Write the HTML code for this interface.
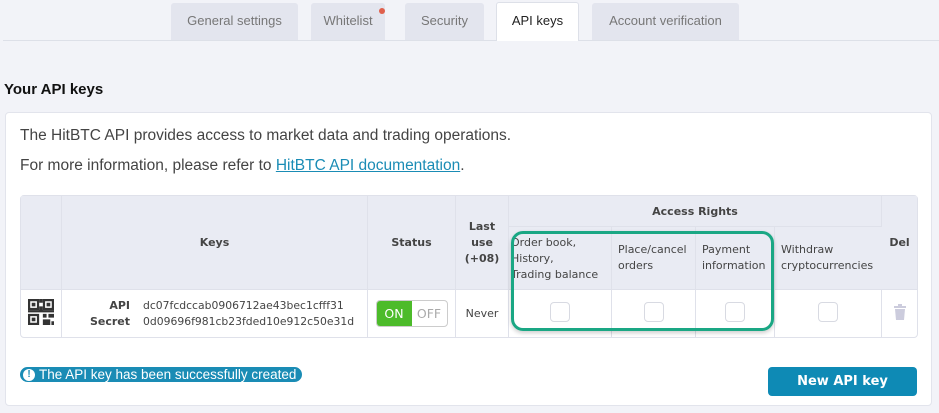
<!DOCTYPE html>
<html><head><meta charset="utf-8"><style>
*{box-sizing:border-box;margin:0;padding:0}
body{width:939px;height:413px;background:#f2f3f8;font-family:"Liberation Sans",sans-serif;position:relative;overflow:hidden;color:#333}
.tab{position:absolute;top:3px;height:37px;background:#e3e5ee;border-radius:3px 3px 0 0;color:#777;font-size:13px;text-align:center;line-height:36px}
.tab.act{background:#fff;color:#222;top:2px;height:39px;border:1px solid #dde0e8;border-bottom:none}
.line{position:absolute;left:3px;right:0;top:40px;height:1px;background:#dde0e8}
h2{position:absolute;left:4px;top:81px;font-size:15px;font-weight:bold;color:#111}
.card{position:absolute;left:5px;top:112px;width:927px;height:294px;background:#fff;border:1px solid #e2e4ec;border-radius:4px}
.p{position:absolute;left:20px;font-size:15.5px;color:#444;white-space:nowrap}
a{color:#1a8cb5;text-decoration:underline}
table{position:absolute;left:20px;top:195px;width:898px;height:143px;border-collapse:separate;border-spacing:0;border:1px solid #dfe1ea;border-radius:4px;font-family:"DejaVu Sans",sans-serif;font-size:10px;color:#444}
td,th{border-right:1px solid #dfe1ea;border-bottom:1px solid #dfe1ea;text-align:center;vertical-align:middle}
th{background:#e9ebf3;font-weight:bold;font-size:11px;color:#444}
th.s{font-weight:normal;text-align:left;padding-left:6px;line-height:16px;font-size:11px;white-space:nowrap}
tr td{border-bottom:none}
td:last-child,th:last-child{border-right:none}
.cb{display:inline-block;width:20px;height:20px;border:1px solid #d8dae2;border-radius:4px}
.hl{position:absolute;left:511px;top:231px;width:263px;height:100px;border:3px solid #1aa784;border-radius:12px;box-shadow:0 2px 4px rgba(0,0,0,.2)}
.tg{display:inline-flex;border:1px solid #ccc;border-radius:4px;overflow:hidden;height:27px;font-size:12.5px;width:72px}
.tg span{flex:1;line-height:25px}
.note{position:absolute;left:20px;top:367px;width:282px;height:15px;background:#1a8cb5;color:#fff;border-radius:8px;font-size:13.5px;line-height:15px;padding-left:19px;white-space:nowrap;overflow:hidden}
.note:before{content:"!";position:absolute;left:3px;top:1.5px;width:12px;height:12px;border-radius:50%;background:#fff;color:#1a8cb5;font-size:10px;line-height:12px;text-align:center;font-weight:bold}
.btn{position:absolute;left:768px;top:367px;width:149px;height:29px;background:#0e8ab5;border-radius:4px;color:#fff;font-weight:bold;font-size:13px;text-align:center;line-height:29px;font-family:"DejaVu Sans",sans-serif}
</style></head><body>
<div class="line"></div>
<div class="tab" style="left:171px;width:127px">General settings</div>
<div class="tab" style="left:311px;width:74px">Whitelist<span style="position:absolute;left:68px;top:5px;width:6px;height:6px;border-radius:50%;background:#e0604c"></span></div>
<div class="tab" style="left:405px;width:79px">Security</div>
<div class="tab act" style="left:496px;width:83px">API keys</div>
<div class="tab" style="left:592px;width:147px">Account verification</div>
<h2>Your API keys</h2>
<div class="card"></div>
<div class="p" style="top:127px">The HitBTC API provides access to market data and trading operations.</div>
<div class="p" style="top:157px">For more information, please refer to <a>HitBTC API documentation</a>.</div>
<table>
<colgroup><col style="width:41px"><col style="width:306px"><col style="width:88px"><col style="width:53px"><col style="width:103px"><col style="width:84px"><col style="width:79px"><col style="width:107px"><col></colgroup>
<tr style="height:31px"><th rowspan="2"></th><th rowspan="2">Keys</th><th rowspan="2">Status</th><th rowspan="2" style="line-height:16px">Last<br>use<br>(+08)</th><th colspan="4">Access Rights</th><th rowspan="2">Del</th></tr>
<tr style="height:63px"><th class="s" style="padding-left:2px;vertical-align:top;padding-top:8px">Order book,<br>History,<br>Trading balance</th><th class="s">Place/cancel<br>orders</th><th class="s">Payment<br>information</th><th class="s">Withdraw<br>cryptocurrencies</th></tr>
<tr><td><svg width="26" height="26" viewBox="0 0 7 7"><g fill="#333"><path d="M0 0h3v3H0zM4 0h3v3H4zM0 4h3v3H0z"/><path fill="#fff" d="M.6.6h1.8v1.8H.6zM4.6.6h1.8v1.8H4.6zM.6 4.6h1.8v1.8H.6z"/><path d="M1 1h1v1H1zM5 1h1v1H5zM1 5h1v1H1zM3 0h1v1H3zM3 2h1v1H3zM0 3h7v.6H0zM4 4h1v1H4zM5.5 4h1.5v1H5.5zM4 5.5h2v1.5H4zM6.3 6h.7v1h-.7z"/></g></svg></td>
<td style="text-align:left;padding-left:0"><div style="display:flex;line-height:16px;font-size:10.8px"><div style="width:68px;text-align:right;font-weight:bold;font-size:11px">API<br>Secret</div><div style="padding-left:13px">dc07fcdccab0906712ae43bec1cfff31<br>0d09696f981cb23fded10e912c50e31d</div></div></td>
<td><span class="tg"><span style="background:#4cbb2a;color:#fff">ON</span><span style="color:#aaa">OFF</span></span></td>
<td style="font-size:11px">Never</td>
<td><span class="cb"></span></td><td><span class="cb"></span></td><td><span class="cb"></span></td><td><span class="cb"></span></td>
<td><svg width="12" height="16" viewBox="0 0 12 16"><g fill="#ccd"><rect x="0" y="2" width="12" height="2"/><rect x="4" y="0" width="4" height="2"/><path d="M1 5h10l-1 11H2z"/></g></svg></td></tr>
</table>
<div class="hl"></div>
<div class="note">The API key has been successfully created</div>
<div class="btn">New API key</div>
</body></html>
